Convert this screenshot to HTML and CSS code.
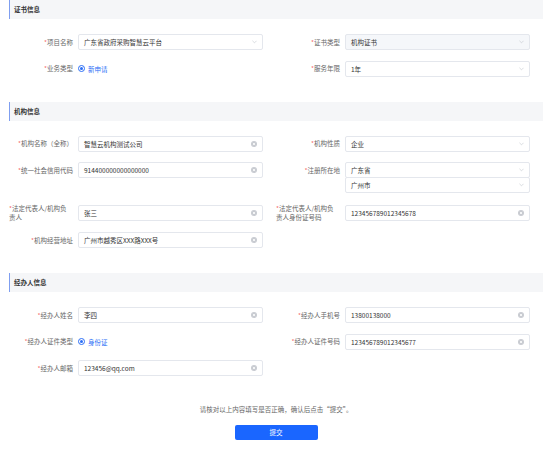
FILE: index.html
```html
<!DOCTYPE html>
<html lang="zh-CN">
<head>
    <meta charset="UTF-8">
    <meta name="viewport" content="width=device-width, initial-scale=1.0">
    <title>证书申请</title>
    <link rel="stylesheet" href="styles.css">
</head>
<body>
    <div class="page">
        <section class="block">
            <h2 class="block-title">证书信息</h2>
            <div class="form-grid">
                <div class="form-item">
                    <label class="form-label"><i>*</i>项目名称</label>
                    <div class="field"><span>广东省政府采购智慧云平台</span><svg class="arrow" viewBox="0 0 6 4"><polyline points="0.5,0.5 3,3 5.5,0.5"/></svg></div>
                </div>
                <div class="form-item">
                    <label class="form-label"><i>*</i>证书类型</label>
                    <div class="field disabled"><span>机构证书</span><svg class="arrow" viewBox="0 0 6 4"><polyline points="0.5,0.5 3,3 5.5,0.5"/></svg></div>
                </div>
                <div class="form-item">
                    <label class="form-label"><i>*</i>业务类型</label>
                    <div class="radio"><span class="radio-dot"></span>新申请</div>
                </div>
                <div class="form-item">
                    <label class="form-label"><i>*</i>服务年限</label>
                    <div class="field"><span>1年</span><svg class="arrow" viewBox="0 0 6 4"><polyline points="0.5,0.5 3,3 5.5,0.5"/></svg></div>
                </div>
            </div>
        </section>

        <section class="block">
            <h2 class="block-title">机构信息</h2>
            <div class="form-grid">
                <div class="form-item">
                    <label class="form-label"><i>*</i>机构名称（全称）</label>
                    <div class="field"><span>智慧云机构测试公司</span><svg class="clear" viewBox="0 0 6 6"><circle cx="3" cy="3" r="3"/><path d="M1.9 1.9L4.1 4.1M4.1 1.9L1.9 4.1"/></svg></div>
                </div>
                <div class="form-item">
                    <label class="form-label"><i>*</i>机构性质</label>
                    <div class="field"><span>企业</span><svg class="arrow" viewBox="0 0 6 4"><polyline points="0.5,0.5 3,3 5.5,0.5"/></svg></div>
                </div>
                <div class="form-item top">
                    <label class="form-label"><i>*</i>统一社会信用代码</label>
                    <div class="field"><span>914400000000000000</span><svg class="clear" viewBox="0 0 6 6"><circle cx="3" cy="3" r="3"/><path d="M1.9 1.9L4.1 4.1M4.1 1.9L1.9 4.1"/></svg></div>
                </div>
                <div class="form-item top">
                    <label class="form-label"><i>*</i>注册所在地</label>
                    <div class="stack">
                        <div class="field"><span>广东省</span><svg class="arrow" viewBox="0 0 6 4"><polyline points="0.5,0.5 3,3 5.5,0.5"/></svg></div>
                        <div class="field"><span>广州市</span><svg class="arrow" viewBox="0 0 6 4"><polyline points="0.5,0.5 3,3 5.5,0.5"/></svg></div>
                    </div>
                </div>
                <div class="form-item">
                    <label class="form-label wrap"><i>*</i>法定代表人/机构负<br>责人</label>
                    <div class="field"><span>张三</span><svg class="clear" viewBox="0 0 6 6"><circle cx="3" cy="3" r="3"/><path d="M1.9 1.9L4.1 4.1M4.1 1.9L1.9 4.1"/></svg></div>
                </div>
                <div class="form-item">
                    <label class="form-label wrap"><i>*</i>法定代表人/机构负<br>责人身份证号码</label>
                    <div class="field"><span>123456789012345678</span><svg class="clear" viewBox="0 0 6 6"><circle cx="3" cy="3" r="3"/><path d="M1.9 1.9L4.1 4.1M4.1 1.9L1.9 4.1"/></svg></div>
                </div>
                <div class="form-item">
                    <label class="form-label"><i>*</i>机构经营地址</label>
                    <div class="field"><span>广州市越秀区XXX路XXX号</span><svg class="clear" viewBox="0 0 6 6"><circle cx="3" cy="3" r="3"/><path d="M1.9 1.9L4.1 4.1M4.1 1.9L1.9 4.1"/></svg></div>
                </div>
            </div>
        </section>

        <section class="block">
            <h2 class="block-title">经办人信息</h2>
            <div class="form-grid">
                <div class="form-item">
                    <label class="form-label"><i>*</i>经办人姓名</label>
                    <div class="field"><span>李四</span><svg class="clear" viewBox="0 0 6 6"><circle cx="3" cy="3" r="3"/><path d="M1.9 1.9L4.1 4.1M4.1 1.9L1.9 4.1"/></svg></div>
                </div>
                <div class="form-item">
                    <label class="form-label"><i>*</i>经办人手机号</label>
                    <div class="field"><span>13800138000</span><svg class="clear" viewBox="0 0 6 6"><circle cx="3" cy="3" r="3"/><path d="M1.9 1.9L4.1 4.1M4.1 1.9L1.9 4.1"/></svg></div>
                </div>
                <div class="form-item">
                    <label class="form-label"><i>*</i>经办人证件类型</label>
                    <div class="radio"><span class="radio-dot"></span>身份证</div>
                </div>
                <div class="form-item">
                    <label class="form-label"><i>*</i>经办人证件号码</label>
                    <div class="field"><span>123456789012345677</span><svg class="clear" viewBox="0 0 6 6"><circle cx="3" cy="3" r="3"/><path d="M1.9 1.9L4.1 4.1M4.1 1.9L1.9 4.1"/></svg></div>
                </div>
                <div class="form-item">
                    <label class="form-label"><i>*</i>经办人邮箱</label>
                    <div class="field"><span>123456@qq.com</span><svg class="clear" viewBox="0 0 6 6"><circle cx="3" cy="3" r="3"/><path d="M1.9 1.9L4.1 4.1M4.1 1.9L1.9 4.1"/></svg></div>
                </div>
            </div>
        </section>

        <div class="submit-bar">
            <p>请核对以上内容填写是否正确，确认后点击“提交”。</p>
            <button class="btn-submit">提交</button>
        </div>
    </div>
</body>
</html>
```

FILE: styles.css
```css
* {
    margin: 0;
    padding: 0;
    box-sizing: border-box;
    font-family: "Noto Sans CJK SC", "Noto Sans", sans-serif;
}

body {
    background-color: #fff;
    color: #333;
}

.page {
    width: 534px;
    margin-left: 9px;
}

.block-title {
    height: 19px;
    line-height: 19px;
    background-color: #f5f6f8;
    border-left: 1px solid #7f9ef0;
    padding-left: 4px;
    font-size: 6.5px;
    font-weight: bold;
    color: #333;
}

.form-grid {
    display: grid;
    grid-template-columns: 267px 267px;
    row-gap: 10.5px;
    padding: 15px 0 25px;
}

.form-item {
    display: flex;
    align-items: center;
}

.form-item.top {
    align-items: flex-start;
}

.form-label {
    width: 69px;
    flex-shrink: 0;
    min-height: 16px;
    padding-right: 5px;
    display: flex;
    align-items: center;
    justify-content: flex-end;
    text-align: right;
    font-size: 6.5px;
    line-height: 9px;
    color: #666;
    white-space: nowrap;
}

.form-label.wrap {
    display: block;
    min-height: 0;
    text-align: left;
    padding-top: 0;
}

.form-label i {
    color: #f56c6c;
    font-style: normal;
}

.field {
    width: 185px;
    height: 16px;
    border: 1px solid #e4e7ed;
    border-radius: 2px;
    background-color: #fff;
    display: flex;
    align-items: center;
    justify-content: space-between;
    padding: 0 5px;
    font-size: 6.5px;
    color: #333;
}

.field.disabled {
    background-color: #f5f7fa;
}

.stack .field + .field {
    margin-top: -1px;
}

.arrow {
    width: 5px;
    height: 4px;
    fill: none;
    stroke: #c0c4cc;
    stroke-width: 0.7;
}

.clear {
    width: 6px;
    height: 6px;
}

.clear circle {
    fill: #c8cbd1;
}

.clear path {
    stroke: #fff;
    stroke-width: 0.8;
}

.radio {
    display: flex;
    align-items: center;
    gap: 3px;
    height: 16px;
    font-size: 6.5px;
    color: #2b6ef6;
}

.radio-dot {
    width: 7px;
    height: 7px;
    border: 1px solid #2b6ef6;
    border-radius: 50%;
    display: flex;
    align-items: center;
    justify-content: center;
}

.radio-dot::after {
    content: "";
    width: 3px;
    height: 3px;
    border-radius: 50%;
    background-color: #2b6ef6;
}

.submit-bar {
    padding-top: 4px;
    text-align: center;
}

.submit-bar p {
    font-size: 6.5px;
    line-height: 9px;
    color: #666;
}

.btn-submit {
    width: 83px;
    height: 15px;
    margin-top: 10.5px;
    border: none;
    border-radius: 2px;
    background-color: #1a66ff;
    color: #fff;
    font-size: 6.5px;
    cursor: pointer;
}
```
